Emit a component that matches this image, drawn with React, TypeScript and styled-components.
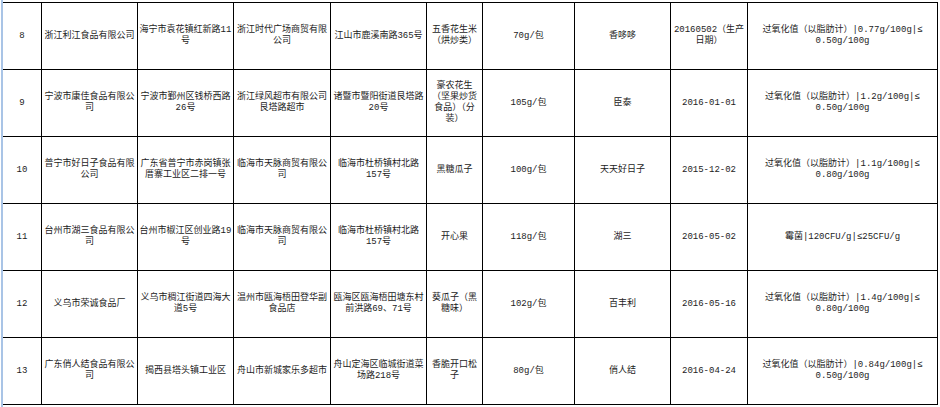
import styled, { createGlobalStyle } from "styled-components";
import { FC } from "react";

const COLS = [39, 96, 96, 97, 96, 56, 92, 96, 77, 190];

const rows: string[][] = [
  [
    "8",
    "浙江利江食品有限公司",
    "海宁市袁花镇红新路11\n号",
    "浙江时代广场商贸有限\n公司",
    "江山市鹿溪南路365号",
    "五香花生米\n（烘炒类）",
    "70g/包",
    "香哆哆",
    "20160502（生产\n日期）",
    "过氧化值（以脂肪计）|0.77g/100g|≤\n0.50g/100g",
  ],
  [
    "9",
    "宁波市康佳食品有限公\n司",
    "宁波市鄞州区钱桥西路\n26号",
    "浙江绿风超市有限公司\n艮塔路超市",
    "诸暨市暨阳街道艮塔路\n20号",
    "豪农花生\n（坚果炒货\n食品）（分\n装）",
    "105g/包",
    "臣泰",
    "2016-01-01",
    "过氧化值（以脂肪计）|1.2g/100g|≤\n0.50g/100g",
  ],
  [
    "10",
    "普宁市好日子食品有限\n公司",
    "广东省普宁市赤岗镇张\n厝寨工业区二排一号",
    "临海市天脉商贸有限公\n司",
    "临海市杜桥镇村北路\n157号",
    "黑糖瓜子",
    "100g/包",
    "天天好日子",
    "2015-12-02",
    "过氧化值（以脂肪计）|1.1g/100g|≤\n0.80g/100g",
  ],
  [
    "11",
    "台州市湖三食品有限公\n司",
    "台州市椒江区创业路19\n号",
    "临海市天脉商贸有限公\n司",
    "临海市杜桥镇村北路\n157号",
    "开心果",
    "118g/包",
    "湖三",
    "2016-05-02",
    "霉菌|120CFU/g|≤25CFU/g",
  ],
  [
    "12",
    "义乌市荣诚食品厂",
    "义乌市稠江街道四海大\n道5号",
    "温州市瓯海梧田登华副\n食品店",
    "瓯海区瓯海梧田塘东村\n前洪路69、71号",
    "葵瓜子（黑\n糖味）",
    "102g/包",
    "百丰利",
    "2016-05-16",
    "过氧化值（以脂肪计）|1.4g/100g|≤\n0.80g/100g",
  ],
  [
    "13",
    "广东俏人结食品有限公\n司",
    "揭西县塔头镇工业区",
    "舟山市新城家乐多超市",
    "舟山定海区临城街道菜\n场路218号",
    "香脆开口松\n子",
    "80g/包",
    "俏人结",
    "2016-04-24",
    "过氧化值（以脂肪计）|0.84g/100g|≤\n0.50g/100g",
  ],
];

const App: FC = () => (
  <>
    <GlobalStyle />
    <Sheet>
      <Table>
        {rows.map((row) =>
          row.map((text, i) => <Cell key={`${row[0]}-${i}`}>{text}</Cell>)
        )}
      </Table>
    </Sheet>
  </>
);

export default App;

// styled components

const GlobalStyle = createGlobalStyle`
  html, body {
    margin: 0;
    padding: 0;
    background: #ffffff;
  }
  body {
    font-family: "Liberation Mono", "Noto Sans CJK SC", monospace;
  }
`;

const Sheet = styled.div`
  width: 940px;
  height: 407px;
  margin-left: 1px;
  padding-top: 2px;
  box-sizing: border-box;
  border-left: 2px solid #a9c4e6;
  overflow: hidden;
`;

const Table = styled.div`
  display: grid;
  grid-template-columns: ${COLS.map((w) => `${w}px`).join(" ")};
  grid-auto-rows: 67px;
  border-top: 1px solid #000;
  width: max-content;
`;

const Cell = styled.div`
  display: flex;
  align-items: center;
  justify-content: center;
  box-sizing: border-box;
  padding: 0 1px;
  border-right: 1px solid #000;
  border-bottom: 1px solid #000;
  font-size: 9px;
  line-height: 11px;
  color: #1c1c1c;
  text-align: center;
  white-space: pre;
  overflow: hidden;
`;
